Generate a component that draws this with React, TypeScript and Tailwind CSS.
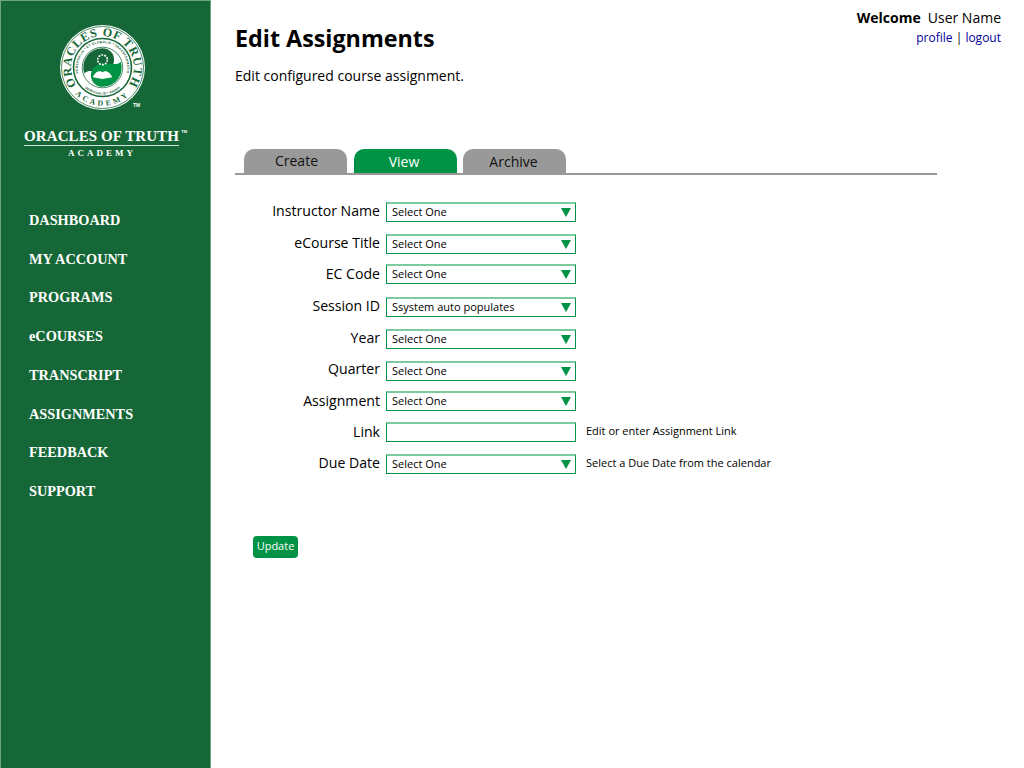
const NAV = ["DASHBOARD", "MY ACCOUNT", "PROGRAMS", "eCOURSES", "TRANSCRIPT", "ASSIGNMENTS", "FEEDBACK", "SUPPORT"];

const ROWS = [
  { label: "Instructor Name", value: "Select One", gap: "mt-0", labelClass: "pb-[3px]" },
  { label: "eCourse Title", value: "Select One", gap: "mt-[12px]", labelClass: "pb-[3px]" },
  { label: "EC Code", value: "Select One", gap: "mt-[10px]", labelClass: "pb-[1px]" },
  { label: "Session ID", value: "Ssystem auto populates", gap: "mt-[13px]", labelClass: "pb-[3px]" },
  { label: "Year", value: "Select One", gap: "mt-[12px]", labelClass: "pb-[3px]" },
  { label: "Quarter", value: "Select One", gap: "mt-[12px]", labelClass: "pb-[5px]" },
  { label: "Assignment", value: "Select One", gap: "mt-[10px]", labelClass: "pb-[1px]" },
  { label: "Link", input: true, note: "Edit or enter Assignment Link", gap: "mt-[11px]", labelClass: "pb-[1px]" },
  { label: "Due Date", value: "Select One", note: "Select a Due Date from the calendar", gap: "mt-[12px]", labelClass: "pb-[3px]" },
];

function Seal() {
  return (
    <svg width="85" height="85" viewBox="0 0 88 88">
      <defs>
        <path id="sealTop" d="M16 60.5 A32.5 32.5 0 1 1 72 60.5" />
        <path id="sealBottom" d="M12 67.2 A39.5 39.5 0 0 0 76 67.2" />
        <path id="sealInner" d="M22.5 58 A25.5 25.5 0 1 1 65.5 58" />
        <path id="sealInnerLow" d="M20 58.5 A28 28 0 0 0 68 58.5" />
      </defs>
      <circle cx="44" cy="44" r="44" fill="#ffffff" />
      <circle cx="44" cy="44" r="42.5" fill="none" stroke="#166737" strokeWidth="0.8" />
      <circle cx="44" cy="44" r="30" fill="none" stroke="#166737" strokeWidth="1.6" />
      <circle cx="44" cy="44" r="21" fill="#ffffff" stroke="#166737" strokeWidth="0.8" />
      <path d="M44 24 A20 20 0 0 0 25 50 C29 46 34 48 44 48 A12 12 0 0 0 44 24Z" fill="#166737" />
      <path d="M44 24 A20 20 0 0 0 25 50 C29 46 34 48 44 48 A12 12 0 0 0 44 24Z" fill="#009245" transform="rotate(180 44 44)" />
      <circle cx="44" cy="36" r="5" fill="none" stroke="#ffffff" strokeWidth="1.6" strokeDasharray="2 1.1" />
      <path d="M34 54 C37 47 42 47 44 49 C46 47 51 47 54 54 L44 56Z" fill="#ffffff" />
      <text fontFamily="Liberation Serif, serif" fontWeight="700" fontSize="12.5" letterSpacing="0.8" fill="#166737">
        <textPath href="#sealTop" startOffset="50%" textAnchor="middle">ORACLES OF TRUTH</textPath>
      </text>
      <text fontFamily="Liberation Serif, serif" fontWeight="700" fontSize="8" letterSpacing="3" fill="#166737">
        <textPath href="#sealBottom" startOffset="50%" textAnchor="middle">ACADEMY</textPath>
      </text>
      <text fontFamily="Liberation Sans, sans-serif" fontWeight="700" fontSize="3.4" letterSpacing="0.25" fill="#166737">
        <textPath href="#sealInner" startOffset="50%" textAnchor="middle">PERSONALIS * ET GLOBALIS * TRANSFORMATIO</textPath>
      </text>
      <text fontFamily="Liberation Sans, sans-serif" fontWeight="700" fontSize="3.4" letterSpacing="0.25" fill="#166737">
        <textPath href="#sealInnerLow" startOffset="50%" textAnchor="middle">SPIRITUALIS * ANIMA</textPath>
      </text>
    </svg>
  );
}

function SelectBox({ value }: { value: string }) {
  return (
    <div className="flex h-[20px] w-[190px] items-center justify-between border border-[#009245] border-t-2 border-t-[#7ccb9e] bg-white pl-[5px] pr-[4px] text-[11px] text-black">
      <span>{value}</span>
      <svg width="10" height="9" viewBox="0 0 10 9">
        <path d="M0 0H10L5 9Z" fill="#009245" />
      </svg>
    </div>
  );
}

export default function App() {
  return (
    <div className="flex min-h-[768px] bg-white font-['Open_Sans',sans-serif] text-black">
      <aside className="flex w-[211px] shrink-0 flex-col items-start border-x border-t border-[#6fa587] bg-[#166737] text-white">
        <div className="relative mt-[24px] ml-[59px]">
          <Seal />
          <span className="absolute left-[73px] top-[77px] font-['Liberation_Sans',sans-serif] text-[5px] leading-[6px] font-bold">TM</span>
        </div>
        <div className="relative mt-[18px] ml-[23px] w-[155px] border-b border-white/80 text-center font-['Liberation_Serif',serif] text-[15px] leading-[17px] font-bold tracking-[0.1px] whitespace-nowrap">
          ORACLES OF TRUTH
          <span className="absolute right-[-8px] top-[1px] font-['Liberation_Sans',sans-serif] text-[4px] leading-[6px] tracking-normal">TM</span>
        </div>
        <div className="mt-[1px] ml-[67px] font-['Liberation_Serif',serif] text-[9px] leading-[12px] font-bold tracking-[3px]">ACADEMY</div>
        <nav className="mt-[51px] flex w-full flex-col gap-[18.71px] pl-[28px]">
          {NAV.map((item) => (
            <a key={item} className="font-['Liberation_Serif',serif] text-[14.3px] leading-[20px] font-bold">
              {item}
            </a>
          ))}
        </nav>
      </aside>

      <main className="min-w-0 flex-1">
        <div className="relative pl-[24px]">
          <div className="absolute right-[23px] top-[8px] text-right text-[14px] leading-[20px]">
            <div>
              <span className="font-bold">Welcome</span>
              <span className="ml-[7px]">User Name</span>
            </div>
            <div className="pt-[1px] text-[12px] leading-[18px]">
              <a className="text-[#000099]">profile</a> | <a className="text-[#000099]">logout</a>
            </div>
          </div>

          <h1 className="pt-[22px] text-[23.3px] leading-[33px] font-bold">Edit Assignments</h1>
          <p className="mt-[11px] text-[14px] leading-[20px]">Edit configured course assignment.</p>

          <div className="mt-[63px] w-[702px] border-b-2 border-[#999999]">
            <div className="flex h-[24px] items-stretch gap-[7px] pl-[9px]">
              <div className="flex w-[103px] justify-center rounded-t-[10px] bg-[#999999] pt-[2px] pl-[2px] text-[14px] leading-[20px] text-[#111111]">Create</div>
              <div className="flex w-[103px] justify-center rounded-t-[10px] bg-[#009245] pt-[3px] pr-[3px] text-[14px] leading-[20px] text-white">View</div>
              <div className="ml-[-1px] flex w-[103px] justify-center rounded-t-[10px] bg-[#999999] pt-[3px] pr-[2px] text-[14px] leading-[20px] text-[#111111]">Archive</div>
            </div>
          </div>

          <div className="mt-[27px]">
            {ROWS.map((row) => (
              <div key={row.label} className={`flex h-[20px] items-center ${row.gap}`}>
                <label className={`w-[145px] text-right text-[14.1px] leading-[20px] ${row.labelClass}`}>{row.label}</label>
                <div className="ml-[6px]">
                  {row.input ? (
                    <div className="h-[20px] w-[190px] border border-[#009245] border-t-2 border-t-[#7ccb9e] bg-white" />
                  ) : (
                    <SelectBox value={row.value ?? ""} />
                  )}
                </div>
                {row.note ? <span className="ml-[10px] pb-[2px] text-[11px] leading-[16px]">{row.note}</span> : null}
              </div>
            ))}
          </div>

          <button className="mt-[62px] ml-[18px] flex h-[22px] w-[45px] items-center justify-center rounded-[4px] bg-[#009245] pb-[2px] text-[11px] text-white">
            Update
          </button>
        </div>
      </main>
    </div>
  );
}
